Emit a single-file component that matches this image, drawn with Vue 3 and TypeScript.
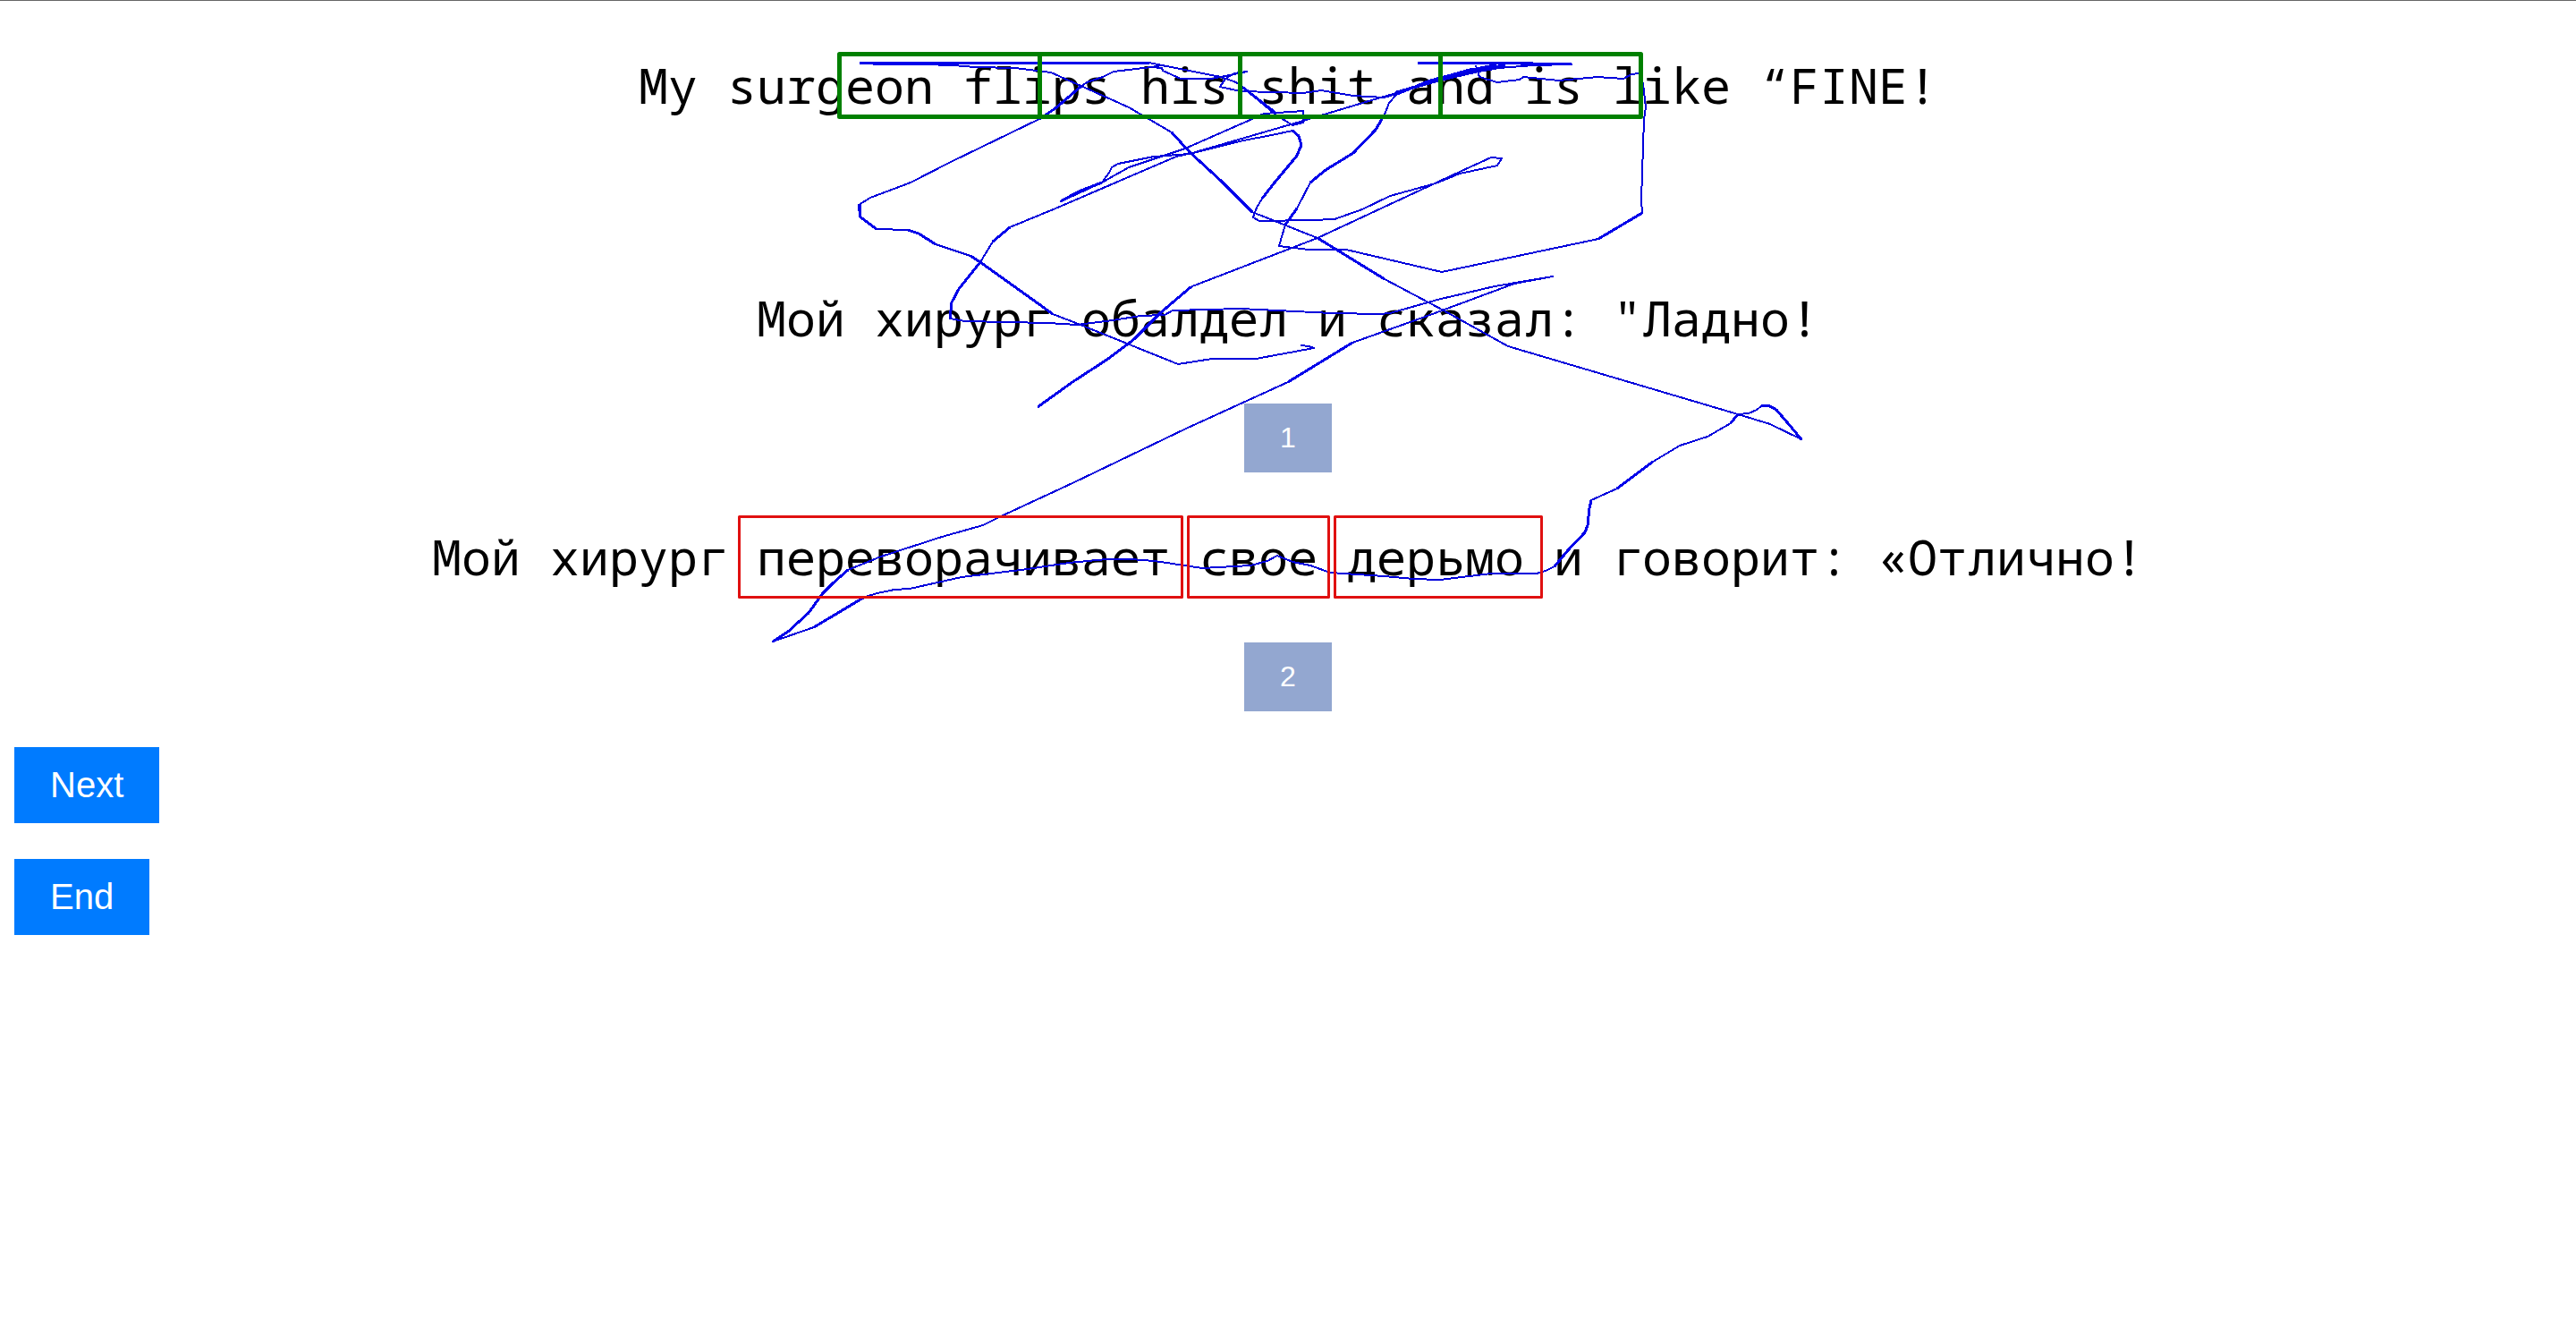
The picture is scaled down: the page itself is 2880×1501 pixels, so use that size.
<script setup lang="ts">
interface Option {
  id: number
  text: string
}

interface Box {
  x: number
  y: number
  width: number
  height: number
}

const source = 'My surgeon flips his shit and is like “FINE!'

const options: Option[] = [
  { id: 1, text: 'Мой хирург обалдел и сказал: "Ладно!' },
  { id: 2, text: 'Мой хирург переворачивает свое дерьмо и говорит: «Отлично!' },
]

// Canvas coordinates; the drawing origin sits 1440px left of the page centre.
// Half-pixel centres keep the odd-width box strokes crisp.
const sourceBoxes: Box[] = [938.5, 1162.5, 1386.5, 1610.5].map((x) => ({ x, y: 60.5, width: 224, height: 70 }))

const errorBoxes: Box[] = [
  { x: 826.5, y: 577.5, width: 495, height: 90 },
  { x: 1328.5, y: 577.5, width: 157, height: 90 },
  { x: 1492.5, y: 577.5, width: 231, height: 90 },
]

// Gaze trail, one polyline per fixation sequence.
const trails: string[] = [
  '961,70 1285,70 1299,73 1365,86 1382,92 1390,98 1426,128 1445,140 1457,137 1457,124 1413,127 1400,133 1325,166 1262,187 1232,204 1206,216 1186,225 1206,214 1232,204 1240,193 1243,187 1250,183 1290,175 1330,172 1390,157 1422,151 1445,146 1452,152 1455,162 1450,174 1425,204 1411,222 1405,232 1401,243 1408,247 1467,246 1492,245 1523,234 1554,219 1605,205 1632,194 1674,185 1679,177 1667,176 1632,192 1473,266 1333,320 1297,350 1268,379 1239,401 1199,427 1160,455',
  '961,70 1066,73 1090,75 1135,76 1175,81 1195,90 1213,98 1262,120 1310,148 1330,170 1365,202 1400,237 1473,266 1548,312 1614,347 1686,387 1943,463 1979,474 2014,491 1998,472 1986,458 1977,453 1969,454 1964,458 1955,462 1943,463 1935,473 1909,488 1878,498 1848,516 1808,546 1779,559 1777,568 1775,587 1772,595 1753,615 1738,633 1728,638 1718,641 1667,641 1610,648 1580,647 1547,644 1517,642 1487,640 1465,632 1445,628 1428,621 1417,627 1398,632 1344,635 1291,627 1264,625 1237,625 1195,629 1149,636 1075,645 1017,658 1000,659 981,663 967,667 910,701 864,717 881,706 904,685 920,663 931,652 948,637 985,622 1019,611 1053,600 1099,587 1117,578 1199,540 1326,479 1440,427 1512,383 1596,353 1693,317 1736,309 1671,320 1607,335 1554,350 1543,351 1489,350 1387,345 1311,347 1302,352 1275,353 1244,358 1204,363 1172,361 1079,359 1062,356 1064,338 1072,323 1096,293 1110,270 1129,254 1180,233 1315,175 1333,171 1457,135 1547,108 1610,90 1683,73',
  '1299,73 1287,75 1245,80 1233,86 1215,92 1208,97 1180,121 1162,133 1063,181 1018,204 973,221 960,229 961,242 980,256 1015,257 1027,261 1046,273 1085,286 1096,293 1177,351 1208,363 1317,407 1355,401 1404,401 1469,389 1463,387 1454,386',
  '1287,75 1299,76 1300,79 1320,88 1355,88 1394,80 1380,82 1370,88 1364,97 1387,102 1423,103 1457,104 1477,101 1513,107 1547,109 1562,105 1597,90 1643,78 1673,72',
  '1673,73 1600,91 1562,105 1553,115 1548,128 1538,145 1513,171 1482,190 1465,204 1450,233 1437,251 1430,275 1463,279 1505,279 1612,304 1787,267 1836,238 1835,223 1838,133 1840,120 1837,93 1832,82 1824,83 1815,88 1786,86 1743,90 1703,86 1699,89 1674,92 1654,86 1650,73',
  '1585,70 1699,70 1757,72 1714,73 1676,76 1614,87 1560,103',
]

const heavyTrails: string[] = [
  '961,70 1285,70',
  '975,71 1066,72',
  '1310,148 1330,170 1365,202 1400,237',
  '1473,266 1548,312',
  '1390,98 1426,126',
  '1186,225 1206,214 1232,204',
  '1562,105 1597,91 1643,78 1683,73',
  '1585,70 1640,70 1699,71 1757,72',
  '1548,128 1538,145 1513,171 1482,190 1465,204',
  '1450,233 1437,251',
  '1445,146 1452,152 1455,162 1450,174 1425,204 1411,222',
  '961,229 961,242 980,256',
  '1015,257 1027,261 1046,273',
  '1085,286 1096,293 1177,351',
  '1062,356 1064,338 1072,323 1096,293',
  '1110,270 1129,254',
  '1331,321 1297,350 1268,379 1239,401 1199,427 1160,455',
  '1512,383 1440,427',
  '2014,491 1998,472 1986,458 1977,453 1969,454',
  '1943,463 1935,473',
  '1848,516 1808,546',
  '1779,559 1777,568 1775,587 1772,595 1753,615 1738,633',
  '967,667 910,701',
  '864,717 881,706 904,685 920,663 931,652 948,637',
  '1208,97 1180,121 1162,133',
  '1787,267 1836,238',
]
</script>

<template>
  <main class="page">
    <svg class="overlay" aria-hidden="true">
      <g transform="translate(-1440 0)">
        <polyline v-for="(t, i) in trails" :key="'t' + i" class="trail" :points="t" />
        <polyline v-for="(t, i) in heavyTrails" :key="'h' + i" class="trail heavy" :points="t" />
        <rect v-for="(b, i) in sourceBoxes" :key="'s' + i" class="box source-box" v-bind="b" />
        <rect v-for="(b, i) in errorBoxes" :key="'e' + i" class="box error-box" v-bind="b" />
      </g>
    </svg>

    <p class="sentence source">{{ source }}</p>

    <section class="options">
      <div v-for="o in options" :key="o.id" class="option">
        <p class="sentence">{{ o.text }}</p>
        <button type="button" class="choice">{{ o.id }}</button>
      </div>
    </section>

    <nav class="actions">
      <button type="button" class="action">Next</button>
      <button type="button" class="action">End</button>
    </nav>
  </main>
</template>

<style>
body {
  background: #fff;
}
</style>

<style scoped>
.page {
  position: relative;
  box-sizing: border-box;
  min-height: 100vh;
  padding: 58px 16px 40px;
  border-top: 1px solid #666;
  overflow: hidden;
  color: #000;
}

.overlay {
  position: absolute;
  top: -1px;
  left: 50%;
  width: 1px;
  height: 1px;
  overflow: visible;
  pointer-events: none;
}

.trail {
  fill: none;
  stroke: #0000dc;
  stroke-width: 2;
  stroke-linejoin: round;
  shape-rendering: crispEdges;
}

.heavy {
  stroke: #0000ea;
  stroke-width: 3;
}

.box {
  fill: none;
  stroke-linejoin: round;
}

.source-box {
  stroke: #008000;
  stroke-width: 5;
}

.error-box {
  stroke: #e01010;
  stroke-width: 3;
}

.sentence {
  margin: 0;
  font-family: "Noto Sans Mono", "DejaVu Sans Mono", monospace;
  font-size: 55px;
  line-height: 72px;
  text-align: center;
}

.options {
  display: flex;
  flex-direction: column;
  gap: 58px;
  margin-top: 188px;
}

.option {
  display: flex;
  flex-direction: column;
  align-items: center;
  gap: 60px;
}

button {
  border: 0;
  border-radius: 0;
  color: #fff;
  font-family: "Liberation Sans", Arial, sans-serif;
  cursor: pointer;
}

.choice {
  position: relative;
  padding: 20px 40px;
  background: #93a7d0;
  font-size: 32px;
  line-height: 37px;
}

.actions {
  display: flex;
  flex-direction: column;
  align-items: flex-start;
  gap: 40px;
  margin-top: 40px;
}

.action {
  padding: 20px 40px;
  background: #007bff;
  font-size: 40px;
  line-height: 45px;
}
</style>
